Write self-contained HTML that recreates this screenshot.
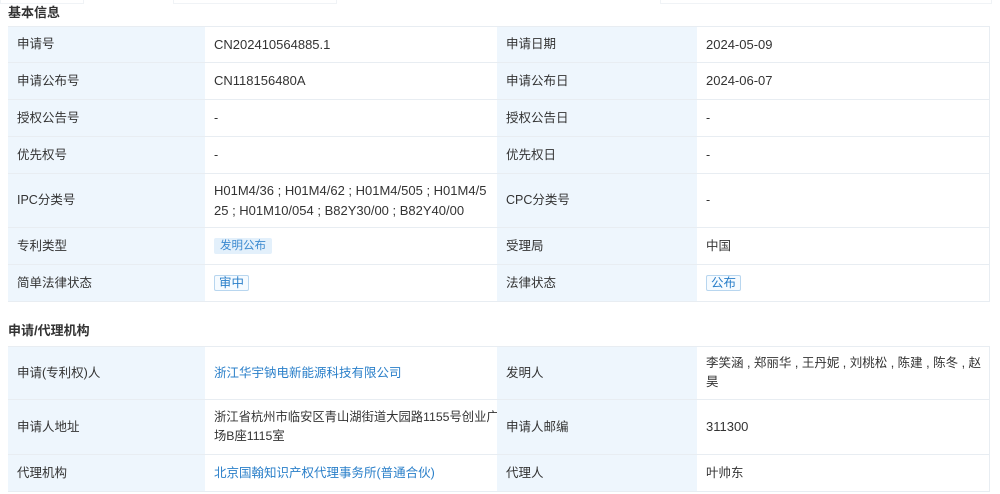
<!DOCTYPE html>
<html><head><meta charset="utf-8"><style>
body{margin:0;width:1000px;height:494px;background:#fff;font-family:"Liberation Sans","Noto Sans CJK SC",sans-serif;font-size:12.5px;color:#333;position:relative;overflow:hidden}
.h{position:absolute;left:8px;font-weight:bold;font-size:13px;color:#333}
.c{position:absolute;box-sizing:border-box;border-bottom:1px solid #e8edf2;display:flex;align-items:center;padding:0 9px;line-height:19px}
.l{background:#eef6fd}
.v{background:#fff}
.n{font-size:13px}
a{color:#2a7fc9;text-decoration:none}
.t1{background:#e3f0fb;color:#3c8ad0;font-size:11.5px;padding:2px 6px;border-radius:2px}
.t2{border:1px solid #b8d6ef;color:#2a7fc9;padding:0 4px;border-radius:2px;background:#f6fbff}
.topline{position:absolute;top:0;height:3px;border:1px solid #f0f3f6;border-top:none}
</style></head><body>
<div class="topline" style="left:0;width:82px"></div>
<div class="topline" style="left:173px;width:162px"></div>
<div class="topline" style="left:660px;width:330px"></div>
<div class="h" style="top:2px">基本信息</div>
<div class="h" style="top:320px">申请/代理机构</div>
<div id="t"></div>
<script>
var rows1=[[26,63,"申请号","<span class='n'>CN202410564885.1</span>","申请日期","<span class='n'>2024-05-09</span>"],
[63,100,"申请公布号","<span class='n'>CN118156480A</span>","申请公布日","<span class='n'>2024-06-07</span>"],
[100,137,"授权公告号","-","授权公告日","-"],
[137,174,"优先权号","-","优先权日","-"],
[174,228,"IPC分类号","<span class='n'>H01M4/36 ; H01M4/62 ; H01M4/505 ; H01M4/5<br>25 ; H01M10/054 ; B82Y30/00 ; B82Y40/00</span>","CPC分类号","-"],
[228,265,"专利类型","<span class='t1'>发明公布</span>","受理局","中国"],
[265,302,"简单法律状态","<span class='t2'>审中</span>","法律状态","<span class='t2'>公布</span>"],
[346,400,"申请(专利权)人","<a>浙江华宇钠电新能源科技有限公司</a>","发明人","李笑涵 , 郑丽华 , 王丹妮 , 刘桃松 , 陈建 , 陈冬 , 赵<br>昊"],
[400,455,"申请人地址","<span style='font-size:12.3px'>浙江省杭州市临安区青山湖街道大园路1155号创业广<br>场B座1115室</span>","申请人邮编","<span class='n'>311300</span>"],
[455,492,"代理机构","<a>北京国翰知识产权代理事务所(普通合伙)</a>","代理人","叶帅东"]];
var cols=[[8,205,"l"],[205,497,"v"],[497,697,"l"],[697,990,"v"]];
var h="";
rows1.forEach(function(r){
 for(var i=0;i<4;i++){var c=cols[i];
  var top=r[0]; var bt=(top==26||top==346)?"border-top:1px solid #e8edf2;":"";
  var br=i==3?"border-right:1px solid #e8edf2;":"";
  h+="<div class='c "+c[2]+"' style='"+bt+br+"left:"+c[0]+"px;width:"+(c[1]-c[0])+"px;top:"+top+"px;height:"+(r[1]-top)+"px'><div style='width:100%;white-space:nowrap'>"+r[2+i]+"</div></div>";}
});
document.getElementById("t").innerHTML=h;
</script>
</body></html>
